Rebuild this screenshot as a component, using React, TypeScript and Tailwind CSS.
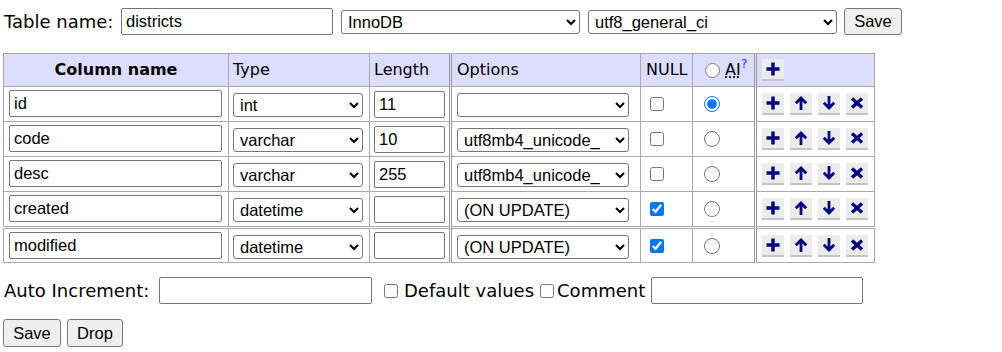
import React from 'react';

type IconKind = 'plus' | 'up' | 'down' | 'cross';

// small navy glyphs used on the row action buttons
function ActionIcon({ kind }: { kind: IconKind }) {
  const paths: Record<IconKind, string> = {
    plus: 'M8 1.5v13M1.5 8h13',
    up: 'M8 15V3M2.8 8.2 8 3l5.2 5.2',
    down: 'M8 1v12M2.8 7.8 8 13l5.2-5.2',
    cross: 'M3 3.5l10 9M13 3.5l-10 9',
  };
  const width = kind === 'up' || kind === 'down' ? 2.8 : 3.4;
  return (
    <svg width="16" height="16" viewBox="0 0 16 16" fill="none" stroke="#000080" strokeWidth={width}>
      <path d={paths[kind]} />
    </svg>
  );
}

function ActionButton({ kind }: { kind: IconKind }) {
  return (
    <button
      type="button"
      className="flex h-[22px] w-[22px] shrink-0 items-center justify-center border-b-2 border-[#c4c4c4] bg-[#ececec]"
    >
      <ActionIcon kind={kind} />
    </button>
  );
}

const inputCls =
  "block h-[27px] rounded-[2px] border border-[#767676] bg-white px-[4px] font-['Liberation_Sans',Arial,sans-serif] text-[16.5px] text-black";
const selectCls =
  "block h-[24px] rounded-[3px] border border-[#767676] bg-white pl-[2px] font-['Liberation_Sans',Arial,sans-serif] text-[16.5px] text-black";

interface Field {
  name: string;
  type: string;
  length: string;
  options: string;
  nullable: boolean;
}

const fields: Field[] = [
  { name: 'id', type: 'int', length: '11', options: '', nullable: false },
  { name: 'code', type: 'varchar', length: '10', options: 'utf8mb4_unicode_ci', nullable: false },
  { name: 'desc', type: 'varchar', length: '255', options: 'utf8mb4_unicode_ci', nullable: false },
  { name: 'created', type: 'datetime', length: '', options: '(ON UPDATE)', nullable: true },
  { name: 'modified', type: 'datetime', length: '', options: '(ON UPDATE)', nullable: true },
];

const types = ['int', 'varchar', 'datetime', 'text', 'date'];
const optionValues = ['', 'utf8mb4_unicode_ci', '(ON UPDATE)'];

export default function App() {
  return (
    <div className="pl-[3px] pt-[8px] font-['DejaVu_Sans',Verdana,sans-serif] text-[18px] text-black">
      <div className="flex h-[27px] items-center">
        <span className="ml-[1px] w-[117px] leading-none">Table name:</span>
        <input className={`${inputCls} w-[212px]`} defaultValue="districts" />
        <select className={`${selectCls} ml-[8px] w-[239px]`} defaultValue="InnoDB">
          <option>InnoDB</option>
          <option>MyISAM</option>
        </select>
        <select className={`${selectCls} ml-[8px] w-[249px]`} defaultValue="utf8_general_ci">
          <option>utf8_general_ci</option>
          <option>utf8mb4_unicode_ci</option>
        </select>
        <button
          type="button"
          className="ml-[7px] h-[27px] w-[58px] rounded-[3px] border border-[#767676] bg-[#efefef] font-['Liberation_Sans',Arial,sans-serif] text-[16.5px]"
        >
          Save
        </button>
      </div>

      <table className="mt-[18px] w-[871px] table-fixed border-collapse border border-[#aaa] text-[16px]">
        <thead>
          <tr className="h-[33px] bg-[#ddf]">
            <th className="w-[225px] border border-[#aaa] px-[5px] text-center font-bold">Column name</th>
            <td className="w-[141px] border border-[#aaa] px-[4px]">Type</td>
            <td className="w-[81px] border border-[#aaa] px-[4px]">Length</td>
            <td className="w-[190px] border border-[#aaa] border-l-[3px] border-l-[#999] border-double px-[5px]">
              Options
            </td>
            <td className="w-[52px] border border-[#aaa] px-[5px]">NULL</td>
            <td className="w-[63px] border border-[#aaa] pl-[12px] pr-0">
              <label className="flex items-center">
                <input type="radio" name="auto_increment_col" className="m-0 h-[15px] w-[15px]" />
                <abbr className="ml-[5px] underline decoration-dotted underline-offset-2" title="Auto Increment">
                  AI
                </abbr>
                <sup className="relative -top-[6px] text-[13px] text-[#2f3bef]">?</sup>
              </label>
            </td>
            <td className="w-[119px] border border-[#aaa] border-l-[3px] border-l-[#999] border-double pl-[5px]">
              <ActionButton kind="plus" />
            </td>
          </tr>
        </thead>
        <tbody>
          {fields.map((f, i) => {
            const last = i === fields.length - 1;
            return (
              <tr key={f.name} className={last ? 'border-t-[3px] border-double border-t-[#aaa]' : ''}>
                <td className={`border border-[#aaa] pl-[5px] pt-[3px] ${last ? 'pb-[3px]' : 'pb-[4px]'}`}>
                  <input className={`${inputCls} w-[213px]`} defaultValue={f.name} />
                </td>
                <td className="border border-[#aaa] pl-[4px]">
                  <div className="flex h-[27px] items-center pt-[2px]">
                    <select className={`${selectCls} w-[130px]`} defaultValue={f.type}>
                      {types.map((t) => (
                        <option key={t}>{t}</option>
                      ))}
                    </select>
                  </div>
                </td>
                <td className="border border-[#aaa] pl-[4px]">
                  <input className={`${inputCls} w-[71px]`} defaultValue={f.length} />
                </td>
                <td className="border border-[#aaa] border-l-[3px] border-l-[#999] border-double pl-[5px]">
                  <div className="flex h-[27px] items-center pt-[2px]">
                    <select className={`${selectCls} w-[172px] pr-[12px]`} defaultValue={f.options}>
                      {optionValues.map((o) => (
                        <option key={o} value={o}>
                          {o}
                        </option>
                      ))}
                    </select>
                  </div>
                </td>
                <td className="border border-[#aaa] pl-[9px]">
                  <input type="checkbox" defaultChecked={f.nullable} className="m-0 block h-[14px] w-[14px]" />
                </td>
                <td className="border border-[#aaa] pl-[11px]">
                  <input
                    type="radio"
                    name="auto_increment_col"
                    defaultChecked={i === 0}
                    className="m-0 block h-[16px] w-[16px]"
                  />
                </td>
                <td className="border border-[#aaa] border-l-[3px] border-l-[#999] border-double pl-[5px]">
                  <div className="flex gap-[6px]">
                    <ActionButton kind="plus" />
                    <ActionButton kind="up" />
                    <ActionButton kind="down" />
                    <ActionButton kind="cross" />
                  </div>
                </td>
              </tr>
            );
          })}
        </tbody>
      </table>

      <div className="mt-[14px] flex h-[27px] items-center">
        <span className="ml-[1px] w-[155px] leading-none">Auto Increment:</span>
        <input className={`${inputCls} w-[213px]`} />
        <label className="ml-[12px] flex items-center">
          <input type="checkbox" className="m-0 h-[14px] w-[14px]" />
          <span className="ml-[6px] leading-none">Default values</span>
        </label>
        <label className="ml-[6px] flex items-center">
          <input type="checkbox" className="m-0 h-[14px] w-[14px]" />
          <span className="ml-[3px] leading-none">Comment</span>
        </label>
        <input className={`${inputCls} ml-[6px] w-[212px]`} />
      </div>

      <div className="mt-[15px] flex gap-[6px]">
        <button
          type="button"
          className="h-[28px] w-[58px] rounded-[3px] border border-[#767676] bg-[#efefef] font-['Liberation_Sans',Arial,sans-serif] text-[16.5px]"
        >
          Save
        </button>
        <button
          type="button"
          className="h-[28px] w-[56px] rounded-[3px] border border-[#767676] bg-[#efefef] font-['Liberation_Sans',Arial,sans-serif] text-[16.5px]"
        >
          Drop
        </button>
      </div>
    </div>
  );
}
